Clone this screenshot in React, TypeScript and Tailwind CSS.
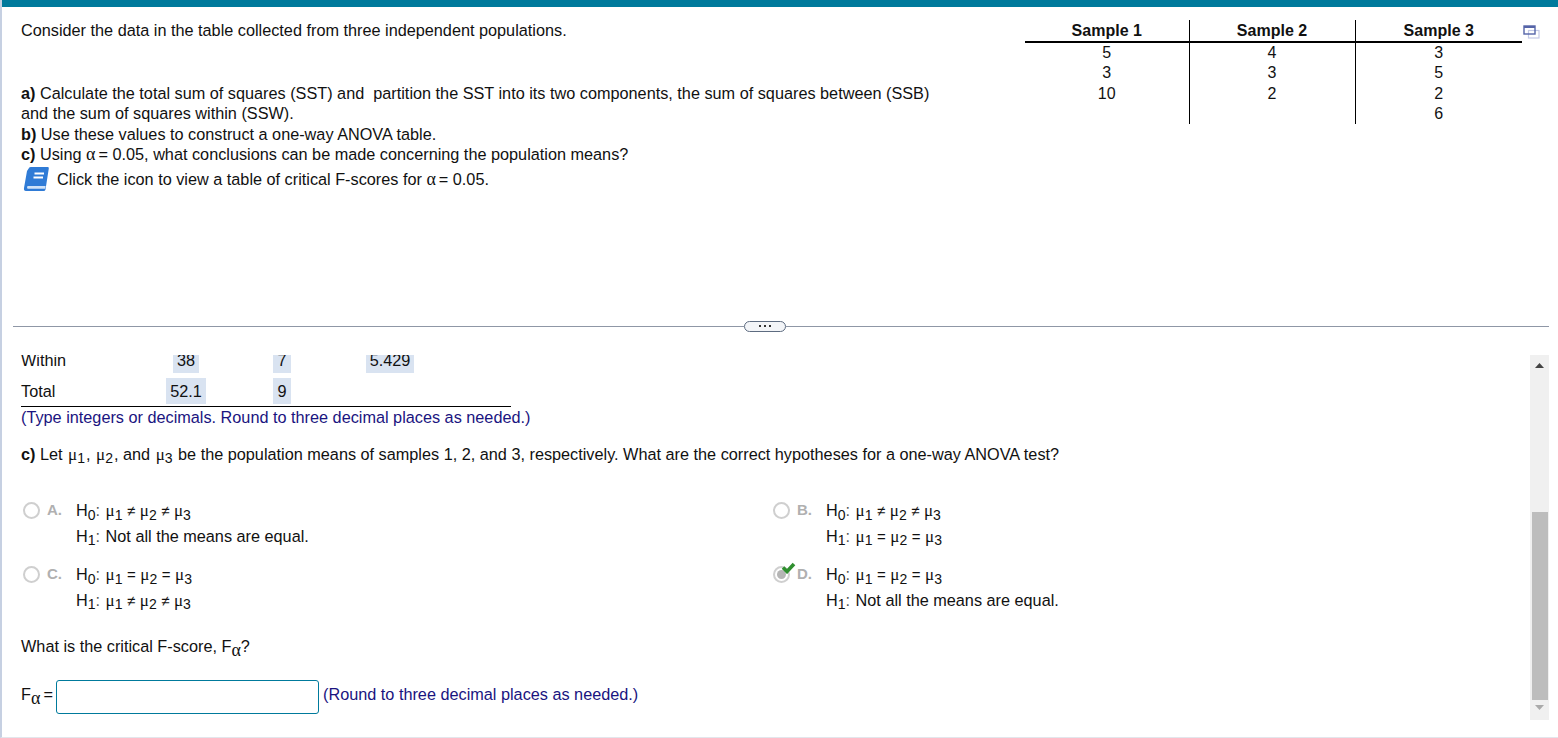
import type { ReactNode } from "react"

const serif = "font-['Liberation_Serif',serif]"

function Alpha() {
  return <span className={`${serif} text-[18px] leading-none`}>α</span>
}

function Mu({ n }: { n: number }) {
  return (
    <span className="whitespace-nowrap">
      <span className={`${serif} text-[17px]`}>μ</span>
      <sub className="text-[14px]">{n}</sub>
    </span>
  )
}

function Hyp({ n }: { n: number }) {
  return (
    <span className="mr-[1px] whitespace-nowrap">
      H<sub className="text-[14px]">{n}</sub>
      <span className="text-[#555]">:</span>
    </span>
  )
}

function Chain({ op }: { op: string[] }) {
  return (
    <span className="whitespace-nowrap">
      <Mu n={1} /> <span className="text-[15px]">{op[0]}</span> <Mu n={2} /> <span className="text-[15px]">{op[1]}</span> <Mu n={3} />
    </span>
  )
}

function Radio({ checked }: { checked?: boolean }) {
  return (
    <span className="relative flex h-[17px] w-[17px] shrink-0 items-center justify-center rounded-full border-2 border-[#cfcfcf] bg-white">
      {checked && <span className="h-[9px] w-[9px] rounded-full bg-[#b5b5b5]" />}
      {checked && (
        <svg className="absolute left-[6px] top-[-6px]" width="15" height="12" viewBox="0 0 15 12">
          <path d="M2 5.5 L6 9.5 L13 2" fill="none" stroke="#2f8f2f" strokeWidth="3.6" />
        </svg>
      )}
    </span>
  )
}

function Option({ letter, checked, h0, h1 }: { letter: string; checked?: boolean; h0: ReactNode; h1: ReactNode }) {
  return (
    <div className="flex h-[52px] items-start">
      <div className="flex h-[25px] w-[55px] items-center gap-[7px] pl-[2px]">
        <Radio checked={checked} />
        <span className="text-[15px] font-bold text-[#b0b0b0]">{letter}.</span>
      </div>
      <div className="leading-[25.5px]">
        <div>
          <Hyp n={0} /> {h0}
        </div>
        <div>
          <Hyp n={1} /> {h1}
        </div>
      </div>
    </div>
  )
}

function Shaded({ children }: { children: ReactNode }) {
  return <span className="inline-block bg-[#d9e3f1] px-[4px] leading-[26px]">{children}</span>
}

const samples = [
  { name: "Sample 1", values: ["5", "3", "10"] },
  { name: "Sample 2", values: ["4", "3", "2"] },
  { name: "Sample 3", values: ["3", "5", "2", "6"] },
]

export default function App() {
  return (
    <div className="flex h-[738px] w-[1558px] flex-col overflow-hidden border-b border-l-2 border-b-[#e3e6ec] border-l-[#c6d0e2] bg-white font-['Liberation_Sans',Arial,sans-serif] text-[16.25px] leading-[20.5px] text-[#111]">
      <div className="ml-[-2px] h-[7px] shrink-0 bg-[#007a9c]" />

      {/* question + data table */}
      <div className="flex h-[312px] shrink-0 justify-between pt-[13px]">
        <div className="pl-[19px]">
          <p>Consider the data in the table collected from three independent populations.</p>
          <p className="mt-[42px] w-[930px]">
            <b>a)</b> Calculate the total sum of squares (SST) and&nbsp; partition the SST into its two components, the sum of squares between (SSB) and the sum of squares within (SSW).
          </p>
          <p>
            <b>b)</b> Use these values to construct a one-way ANOVA table.
          </p>
          <p>
            <b>c)</b> Using <Alpha /><span className="ml-[3px]">= 0.05, what conclusions can be made concerning the population means?</span>
          </p>
          <div className="mt-[1px] flex items-center gap-[8px] pl-[1px]">
            <svg width="27" height="27" viewBox="0 0 27 27">
              <path d="M7 2 Q7.3 1 9 1 H26 Q27 1 26.8 2.5 L23.5 23.5 Q23.2 25 21.5 25 H4 Q1.5 25 2 22 L5 5 Z" fill="#2f7bd6" />
              <path d="M5.5 20 H23.6 L23.2 22.8 H5.6 Q4.5 21.4 5.5 20 Z" fill="#cfe2f8" />
              <path d="M12.5 7.5 H22 M11.5 11.5 H21" stroke="#ffffff" strokeWidth="1.8" />
            </svg>
            <span>
              Click the icon to view a table of critical F-scores for <Alpha /><span className="ml-[3px]">= 0.05.</span>
            </span>
          </div>
        </div>

        <div className="flex items-start pr-[18px]">
          <table className="w-[497px] table-fixed border-collapse text-center text-[16px]">
            <colgroup>
              <col className="w-[164px]" />
              <col className="w-[166px]" />
              <col className="w-[167px]" />
            </colgroup>
            <thead>
              <tr>
                {samples.map((s, i) => (
                  <th key={s.name} className={`h-[22px] border-b-2 border-black font-bold leading-[19px] ${i < 2 ? "border-r border-r-black" : ""}`}>
                    {s.name}
                  </th>
                ))}
              </tr>
            </thead>
            <tbody>
              {[0, 1, 2, 3].map((row) => (
                <tr key={row}>
                  {samples.map((s, i) => (
                    <td key={s.name} className={`h-[20.25px] p-0 leading-[20.25px] ${i < 2 ? "border-r border-r-black" : ""}`}>
                      {s.values[row]}
                    </td>
                  ))}
                </tr>
              ))}
            </tbody>
          </table>
          <svg className="ml-[1px] mt-[5px]" width="17" height="14" viewBox="0 0 17 14">
            <rect x="5.5" y="5.5" width="10.5" height="7.5" fill="none" stroke="#c3c9e6" strokeWidth="1.2" />
            <rect x="1" y="1" width="11" height="8" fill="none" stroke="#5564a8" strokeWidth="1.4" />
            <path d="M1 2 H12" stroke="#5564a8" strokeWidth="2" />
          </svg>
        </div>
      </div>

      {/* pane divider */}
      <div className="flex h-[14px] shrink-0 items-center pl-[11px] pr-[9px]">
        <div className="h-px w-[731px] bg-[#8f97a6]" />
        <div className="flex h-[11px] w-[42px] items-center justify-center gap-[3px] rounded-full border border-[#5d6b80] bg-[#f3f5f8]">
          <span className="h-[2px] w-[2px] bg-[#333]" />
          <span className="h-[2px] w-[2px] bg-[#333]" />
          <span className="h-[2px] w-[2px] bg-[#333]" />
        </div>
        <div className="h-px flex-1 bg-[#8f97a6]" />
      </div>

      {/* answer pane, scrolled down */}
      <div className="flex min-h-0 flex-1 pt-[22px] pb-[17px]">
        <div className="min-w-0 flex-1 overflow-hidden pl-[19px]">
          <div className="mt-[-8px] w-[490px] border-b border-black pb-[2px]">
            <div className="grid h-[26px] grid-cols-[129px_72px_120px_96px_1fr] items-center text-center">
              <span className="text-left">Within</span>
              <span><Shaded>38</Shaded></span>
              <span><Shaded>7</Shaded></span>
              <span><Shaded>5.429</Shaded></span>
            </div>
            <div className="mt-[5px] grid h-[26px] grid-cols-[129px_72px_120px_96px_1fr] items-center text-center">
              <span className="text-left">Total</span>
              <span><Shaded>52.1</Shaded></span>
              <span><Shaded>9</Shaded></span>
            </div>
          </div>
          <p className="text-[#1a1480]">(Type integers or decimals. Round to three decimal places as needed.)</p>

          <p className="mt-[16px]">
            <b>c)</b> Let <span className="mx-[1px]"><Mu n={1} /></span>, <span className="mx-[1px]"><Mu n={2} /></span>, and <span className="mx-[1px]"><Mu n={3} /></span> be the population means of samples 1, 2, and 3, respectively. What are the correct hypotheses for a one-way ANOVA test?
          </p>

          <div className="mt-[33px] grid w-[1100px] grid-cols-[750px_1fr] gap-y-[12px]">
            <Option letter="A" h0={<Chain op={["≠", "≠"]} />} h1="Not all the means are equal." />
            <Option letter="B" h0={<Chain op={["≠", "≠"]} />} h1={<Chain op={["=", "="]} />} />
            <Option letter="C" h0={<Chain op={["=", "="]} />} h1={<Chain op={["≠", "≠"]} />} />
            <Option letter="D" checked h0={<Chain op={["=", "="]} />} h1="Not all the means are equal." />
          </div>

          <p className="mt-[22px]">
            What is the critical F-score, F<sub className="text-[14px]"><Alpha /></sub>?
          </p>

          <div className="mt-[23px] flex items-center">
            <span className="mb-[4px] w-[35px]">
              F<sub className="text-[14px]"><Alpha /></sub><span className="ml-[3px]">=</span>
            </span>
            <input className="h-[34px] w-[263px] rounded-[3px] border border-[#007a9c] bg-white" />
            <span className="mb-[4px] ml-[4px] text-[#1a1480]">(Round to three decimal places as needed.)</span>
          </div>
        </div>

        <div className="mr-[9px] flex w-[19px] shrink-0 flex-col items-center bg-[#f0f0f0]">
          <svg className="mt-[8px]" width="9" height="5" viewBox="0 0 9 5"><path d="M4.5 0 L9 5 H0 Z" fill="#444" /></svg>
          <div className="mt-[144px] h-[188px] w-[16px] bg-[#bdbdbd]" />
          <svg className="mt-[5px]" width="9" height="5" viewBox="0 0 9 5"><path d="M0 0 H9 L4.5 5 Z" fill="#aaa" /></svg>
        </div>
      </div>
    </div>
  )
}
